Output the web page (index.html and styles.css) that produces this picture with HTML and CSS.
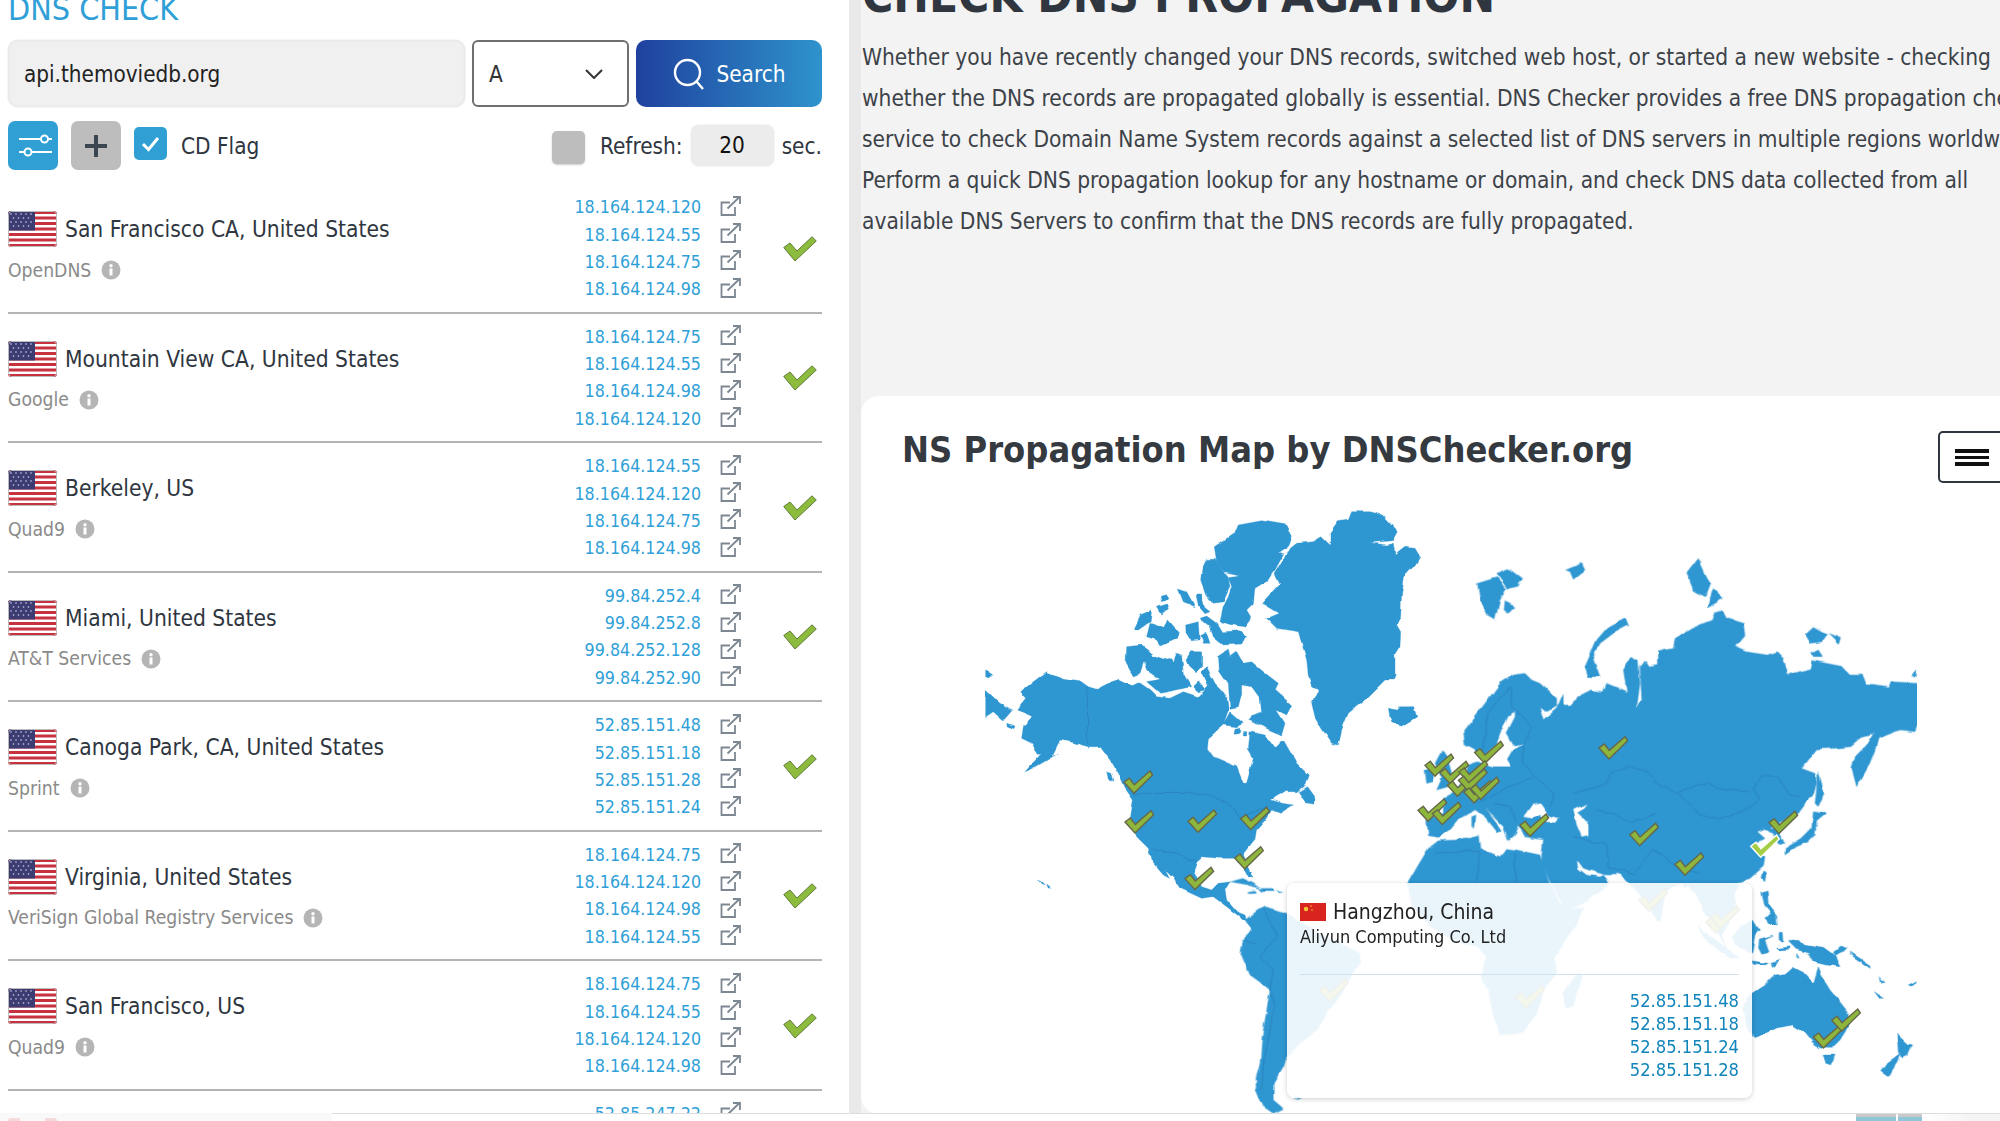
FILE: index.html
```html
<!DOCTYPE html>
<html lang="en">
<head>
<meta charset="utf-8">
<title>DNS Check</title>
<link rel="stylesheet" href="styles.css">
</head>
<body>
<svg class="defs" width="0" height="0">
  <defs>
    <symbol id="us" viewBox="0 0 49 36">
      <rect width="49" height="36" rx="3" fill="#fff"/>
      <g fill="#c8313e">
        <rect width="49" height="3"/><rect y="5.5" width="49" height="3"/><rect y="11" width="49" height="3"/><rect y="16.5" width="49" height="3"/><rect y="22" width="49" height="3"/><rect y="27.5" width="49" height="3"/><rect y="33" width="49" height="3"/>
      </g>
      <rect width="27" height="19.5" fill="#3d3c72"/>
      <g fill="#cfd3ea">
        <circle cx="3" cy="3" r=".8"/><circle cx="8" cy="3" r=".8"/><circle cx="13" cy="3" r=".8"/><circle cx="18" cy="3" r=".8"/><circle cx="23" cy="3" r=".8"/>
        <circle cx="5.5" cy="7" r=".8"/><circle cx="10.5" cy="7" r=".8"/><circle cx="15.5" cy="7" r=".8"/><circle cx="20.5" cy="7" r=".8"/>
        <circle cx="3" cy="11" r=".8"/><circle cx="8" cy="11" r=".8"/><circle cx="13" cy="11" r=".8"/><circle cx="18" cy="11" r=".8"/><circle cx="23" cy="11" r=".8"/>
        <circle cx="5.5" cy="15" r=".8"/><circle cx="10.5" cy="15" r=".8"/><circle cx="15.5" cy="15" r=".8"/><circle cx="20.5" cy="15" r=".8"/>
      </g>
      <rect x=".5" y=".5" width="48" height="35" rx="3" fill="none" stroke="#bdbdbd"/>
    </symbol>
    <symbol id="ext" viewBox="0 0 21 20">
      <path d="M10 6.500H1.500V19H15V11M7.500 12.500L19.500 1M13 1H20V8" fill="none" stroke="#7d8791" stroke-width="1.800"/>
    </symbol>
    <symbol id="good" viewBox="0 0 34 26">
      <path d="M.7 11.500L7 7L14 15L29 .8L33.300 5L12 25Z" fill="#8dbb3d" stroke="#5f7d38"/>
    </symbol>
    <symbol id="info" viewBox="0 0 20 20">
      <circle cx="10" cy="10" r="9.500" fill="#b5b5b5"/>
      <rect x="8.500" y="8.500" width="3" height="7" fill="#fff"/>
      <circle cx="10" cy="5.800" r="1.700" fill="#fff"/>
    </symbol>
    <path id="ck" d="M-14.300 .3L-9 -3.700L-4 2.700L11.700 -11L14.300 -7L-4.300 11.300Z"/>
  </defs>
</svg>

<main class="page">
  <section class="checker">
    <h2 class="checker-title">DNS CHECK</h2>
    <form class="lookup">
      <div class="domain">api.themoviedb.org</div>
      <div class="type">
        <span>A</span>
        <svg class="chevron" viewBox="0 0 18 10" width="18" height="10"><path d="M1 1L9 9L17 1" fill="none" stroke="#333" stroke-width="2"/></svg>
      </div>
      <button type="button" class="search">
        <svg viewBox="0 0 32 32" width="32" height="32"><circle cx="14.500" cy="14.500" r="12.500" fill="none" stroke="#fff" stroke-width="2.400"/><path d="M23.500 23.500L30 31" fill="none" stroke="#fff" stroke-width="2.400"/></svg>
        <span>Search</span>
      </button>
    </form>
    <div class="options">
      <span class="tool tool-blue">
        <svg viewBox="0 0 50 49" width="50" height="49"><g fill="none" stroke="#fff" stroke-width="2"><path d="M11 18H34M44 18H39"/><circle cx="36.500" cy="18" r="3.500"/><path d="M11 31H16M24 31H44"/><circle cx="20" cy="31" r="3.500"/></g></svg>
      </span>
      <span class="tool tool-gray">
        <svg viewBox="0 0 50 49" width="50" height="49"><path d="M14 25H36M25 14V36" stroke="#3b4651" stroke-width="4"/></svg>
      </span>
      <span class="box box-on">
        <svg viewBox="0 0 33 33" width="33" height="33"><path d="M9 17L14.500 22.500L24 11" fill="none" stroke="#fff" stroke-width="3"/></svg>
      </span>
      <span class="cd-label">CD Flag</span>
      <span class="box box-off"></span>
      <span class="refresh-label">Refresh:</span>
      <span class="seconds">20</span>
      <span class="sec-label">sec.</span>
    </div>

    <ul class="results">
      <li class="row">
        <div class="where"><div class="place"><svg class="flag"><use href="#us"/></svg><span>San Francisco CA, United States</span></div><div class="provider">OpenDNS <svg class="info"><use href="#info"/></svg></div></div>
        <div class="ips">
          <div class="ip"><span>18.164.124.120</span><svg class="ext"><use href="#ext"/></svg></div>
          <div class="ip"><span>18.164.124.55</span><svg class="ext"><use href="#ext"/></svg></div>
          <div class="ip"><span>18.164.124.75</span><svg class="ext"><use href="#ext"/></svg></div>
          <div class="ip"><span>18.164.124.98</span><svg class="ext"><use href="#ext"/></svg></div>
        </div>
        <svg class="good"><use href="#good"/></svg>
      </li>
      <li class="row">
        <div class="where"><div class="place"><svg class="flag"><use href="#us"/></svg><span>Mountain View CA, United States</span></div><div class="provider">Google <svg class="info"><use href="#info"/></svg></div></div>
        <div class="ips">
          <div class="ip"><span>18.164.124.75</span><svg class="ext"><use href="#ext"/></svg></div>
          <div class="ip"><span>18.164.124.55</span><svg class="ext"><use href="#ext"/></svg></div>
          <div class="ip"><span>18.164.124.98</span><svg class="ext"><use href="#ext"/></svg></div>
          <div class="ip"><span>18.164.124.120</span><svg class="ext"><use href="#ext"/></svg></div>
        </div>
        <svg class="good"><use href="#good"/></svg>
      </li>
      <li class="row">
        <div class="where"><div class="place"><svg class="flag"><use href="#us"/></svg><span>Berkeley, US</span></div><div class="provider">Quad9 <svg class="info"><use href="#info"/></svg></div></div>
        <div class="ips">
          <div class="ip"><span>18.164.124.55</span><svg class="ext"><use href="#ext"/></svg></div>
          <div class="ip"><span>18.164.124.120</span><svg class="ext"><use href="#ext"/></svg></div>
          <div class="ip"><span>18.164.124.75</span><svg class="ext"><use href="#ext"/></svg></div>
          <div class="ip"><span>18.164.124.98</span><svg class="ext"><use href="#ext"/></svg></div>
        </div>
        <svg class="good"><use href="#good"/></svg>
      </li>
      <li class="row">
        <div class="where"><div class="place"><svg class="flag"><use href="#us"/></svg><span>Miami, United States</span></div><div class="provider">AT&amp;T Services <svg class="info"><use href="#info"/></svg></div></div>
        <div class="ips">
          <div class="ip"><span>99.84.252.4</span><svg class="ext"><use href="#ext"/></svg></div>
          <div class="ip"><span>99.84.252.8</span><svg class="ext"><use href="#ext"/></svg></div>
          <div class="ip"><span>99.84.252.128</span><svg class="ext"><use href="#ext"/></svg></div>
          <div class="ip"><span>99.84.252.90</span><svg class="ext"><use href="#ext"/></svg></div>
        </div>
        <svg class="good"><use href="#good"/></svg>
      </li>
      <li class="row">
        <div class="where"><div class="place"><svg class="flag"><use href="#us"/></svg><span>Canoga Park, CA, United States</span></div><div class="provider">Sprint <svg class="info"><use href="#info"/></svg></div></div>
        <div class="ips">
          <div class="ip"><span>52.85.151.48</span><svg class="ext"><use href="#ext"/></svg></div>
          <div class="ip"><span>52.85.151.18</span><svg class="ext"><use href="#ext"/></svg></div>
          <div class="ip"><span>52.85.151.28</span><svg class="ext"><use href="#ext"/></svg></div>
          <div class="ip"><span>52.85.151.24</span><svg class="ext"><use href="#ext"/></svg></div>
        </div>
        <svg class="good"><use href="#good"/></svg>
      </li>
      <li class="row">
        <div class="where"><div class="place"><svg class="flag"><use href="#us"/></svg><span>Virginia, United States</span></div><div class="provider">VeriSign Global Registry Services <svg class="info"><use href="#info"/></svg></div></div>
        <div class="ips">
          <div class="ip"><span>18.164.124.75</span><svg class="ext"><use href="#ext"/></svg></div>
          <div class="ip"><span>18.164.124.120</span><svg class="ext"><use href="#ext"/></svg></div>
          <div class="ip"><span>18.164.124.98</span><svg class="ext"><use href="#ext"/></svg></div>
          <div class="ip"><span>18.164.124.55</span><svg class="ext"><use href="#ext"/></svg></div>
        </div>
        <svg class="good"><use href="#good"/></svg>
      </li>
      <li class="row">
        <div class="where"><div class="place"><svg class="flag"><use href="#us"/></svg><span>San Francisco, US</span></div><div class="provider">Quad9 <svg class="info"><use href="#info"/></svg></div></div>
        <div class="ips">
          <div class="ip"><span>18.164.124.75</span><svg class="ext"><use href="#ext"/></svg></div>
          <div class="ip"><span>18.164.124.55</span><svg class="ext"><use href="#ext"/></svg></div>
          <div class="ip"><span>18.164.124.120</span><svg class="ext"><use href="#ext"/></svg></div>
          <div class="ip"><span>18.164.124.98</span><svg class="ext"><use href="#ext"/></svg></div>
        </div>
        <svg class="good"><use href="#good"/></svg>
      </li>
      <li class="row">
        <div class="where"><div class="place"><span class="flag flag-ca"></span></div></div>
        <div class="ips">
          <div class="ip"><span>52.85.247.22</span><svg class="ext"><use href="#ext"/></svg></div>
        </div>
        <svg class="good"><use href="#good"/></svg>
      </li>
    </ul>
  </section>

  <section class="about">
    <h1 class="about-title">CHECK DNS PROPAGATION</h1>
    <p class="about-text">Whether you have recently changed your DNS records, switched web host, or started a new website - checking<br>whether the DNS records are propagated globally is essential. DNS Checker provides a free DNS propagation check<br>service to check Domain Name System records against a selected list of DNS servers in multiple regions worldwide.<br>Perform a quick DNS propagation lookup for any hostname or domain, and check DNS data collected from all<br>available DNS Servers to confirm that the DNS records are fully propagated.</p>

    <div class="card">
      <h3 class="card-title">NS Propagation Map by DNSChecker.org</h3>
      <button type="button" class="menu"><span></span><span></span><span></span></button>

      <svg class="map" viewBox="985 510 932 603" width="932" height="603">
        <defs>
          <filter id="coast" filterUnits="userSpaceOnUse" x="975" y="500" width="952" height="623">
            <feTurbulence type="fractalNoise" baseFrequency="0.07" numOctaves="2" seed="4"/>
            <feDisplacementMap in="SourceGraphic" scale="4.500" xChannelSelector="R" yChannelSelector="G"/>
          </filter>
        </defs>
        <g class="world">
        <g class="land" transform="translate(950 490) scale(.33333)">
          <polygon points="212,605 250,575 290,545 340,565 390,572 415,590 440,598 475,580 510,568 545,585 565,575 600,600 620,620 660,625 700,605 745,620 775,590 755,545 770,530 795,580 815,600 830,620 835,660 822,700 840,665 880,700 860,710 820,705 775,745 772,775 790,800 860,830 880,880 890,875 910,805 895,780 900,725 945,735 975,775 1000,750 1040,820 1075,855 1065,885 1040,905 1000,905 960,930 1000,940 1030,945 990,970 965,960 950,985 920,1020 915,1050 880,1095 905,1150 912,1165 895,1160 880,1130 850,1105 810,1105 755,1100 745,1110 730,1150 755,1190 785,1200 805,1180 840,1175 825,1200 830,1230 860,1265 885,1275 890,1292 875,1285 830,1250 790,1220 755,1225 690,1195 670,1165 600,1095 595,1075 560,1040 540,990 550,930 525,895 510,860 480,810 450,770 415,770 360,755 330,750 305,800 325,790 250,835 225,845 275,790 265,790 245,760 215,745 220,710 250,680 200,660 230,625"/>
          <polygon points="605,1090 630,1110 658,1165 640,1155 610,1120"/>
          <polygon points="793,170 855,128 865,105 935,92 1010,105 1027,135 1015,170 985,190 1000,195 975,240 955,270 915,295 910,340 890,360 905,385 885,410 850,405 810,395 820,350 835,320 845,290 835,260 865,255 825,245 800,215"/>
          <polygon points="770,205 795,205 835,260 840,290 820,335 790,340 770,315 755,270 760,225"/>
          <polygon points="1015,180 1040,160 1090,155 1115,140 1140,165 1140,130 1165,95 1195,90 1205,65 1260,65 1300,75 1342,122 1325,152 1260,158 1310,165 1330,160 1335,195 1365,172 1395,175 1410,200 1395,225 1365,258 1355,310 1352,380 1340,405 1352,425 1350,470 1335,495 1335,560 1330,570 1305,570 1250,625 1195,670 1175,720 1165,765 1145,760 1115,715 1095,680 1085,640 1105,595 1085,590 1075,555 1070,510 1045,425 980,415 950,385 985,370 935,340 990,280 975,250 1000,210"/>
          <polygon points="1315,655 1345,660 1390,650 1400,680 1355,708 1325,695 1320,680"/>
          <polygon points="550,415 570,375 605,360 600,395 565,420"/>
          <polygon points="590,440 600,400 645,415 655,390 685,425 680,445 630,465 620,450"/>
          <polygon points="622,352 650,342 655,360 635,372"/>
          <polygon points="630,320 645,312 655,328 635,335"/>
          <polygon points="685,297 710,305 735,350 700,335"/>
          <polygon points="738,315 755,315 765,350 780,362 765,368 745,345"/>
          <polygon points="707,405 745,395 748,450 725,452 708,425"/>
          <polygon points="752,440 770,430 780,460 760,460"/>
          <polygon points="750,385 770,378 800,400 815,425 870,422 887,440 875,462 820,465 790,440 780,410"/>
          <polygon points="530,470 575,465 608,490 580,520 570,550 550,558 528,520"/>
          <polygon points="580,510 600,495 640,510 660,505 670,515 680,490 695,495 700,550 722,590 680,600 630,610 590,575 630,568 590,540"/>
          <polygon points="708,510 725,485 755,485 755,530 735,548 715,530"/>
          <polygon points="730,590 745,575 765,600 745,605"/>
          <polygon points="805,500 835,480 840,500 860,485 880,520 905,515 940,545 985,580 975,600 1025,645 1010,675 980,660 1005,700 995,735 960,720 895,690 910,675 935,665 930,625 905,590 875,585 875,610 865,650 840,655 835,580 808,540"/>
          <polygon points="855,715 870,712 868,728 852,730"/>
          <polygon points="880,725 890,725 890,738 880,738"/>
          <polygon points="1045,905 1070,890 1095,925 1095,940 1065,935"/>
          <polygon points="470,845 485,850 492,877 475,868"/>
          <polygon points="107,540 130,550 120,560 107,558"/>
          <polygon points="107,600 150,640 188,660 160,692 130,665 107,680"/>
          <polygon points="170,700 195,708 192,716 172,708"/>
          <polygon points="262,1170 280,1178 285,1185 275,1180"/>
          <polygon points="290,1185 302,1195 295,1198"/>
          <ellipse class="hole" cx="913" cy="628" rx="10" ry="15"/>
          <polyline class="border" points="413,590 413,760"/>
          <polyline class="border" points="550,910 770,910 850,950 870,985 955,945"/>
          <polyline class="border" points="610,1075 680,1090 720,1110 745,1110"/>
        </g>

        <g class="land" transform="translate(1130 850) scale(.33333)">
          <polygon points="300,95 335,85 370,100 390,115 355,105"/>
          <polygon points="355,125 375,120 380,127 360,128"/>
          <polygon points="385,115 425,115 430,125 395,125"/>
          <polygon points="440,123 458,127 442,128"/>
          <polygon points="345,210 385,180 410,170 470,190 530,225 600,265 690,310 690,335 650,400 640,430 595,480 560,540 520,570 470,620 460,650 430,700 430,750 460,775 430,790 400,770 378,720 378,680 390,640 395,570 420,420 395,400 360,375 332,310 340,265 365,240"/>
          <polygon points="490,745 515,742 505,748"/>
          <polygon points="830,100 850,170 900,230 970,270 1040,290 1070,320 1050,380 1075,420 1085,480 1110,555 1180,545 1225,490 1240,420 1280,370 1275,320 1340,220 1360,170 1310,175 1290,160 1262,100"/>
          <polygon points="1345,365 1355,375 1330,470 1305,470 1300,430"/>
          <polyline class="border" points="400,175 440,260 390,320 430,360 420,420 435,470 400,640 395,720"/>
          <polyline class="border" points="340,270 385,285"/>
        </g>

        <g class="land" transform="translate(1400 520) scale(.33333)">
          <polygon points="85,950 80,900 110,885 130,880 130,835 165,815 195,770 205,735 235,725 280,740 335,740 320,715 335,690 375,672 340,675 320,640 345,590 345,575 325,585 305,630 290,670 250,705 195,675 190,635 240,570 270,530 300,490 340,465 375,460 395,480 420,490 470,535 470,560 440,575 418,560 430,602 470,565 490,520 490,555 515,555 530,530 570,510 610,515 620,490 680,515 670,450 690,415 715,420 720,490 710,565 725,540 720,440 735,420 745,435 775,430 775,395 820,385 825,355 875,325 935,300 945,275 965,268 980,295 1030,310 1035,345 1005,380 1040,395 1105,405 1130,395 1150,415 1165,465 1230,445 1235,418 1320,435 1350,465 1385,465 1395,490 1470,500 1475,485 1556,490 1556,600 1545,635 1500,630 1435,655 1425,690 1405,740 1370,800 1355,745 1365,710 1400,675 1420,640 1385,650 1350,680 1300,685 1250,687 1205,745 1245,760 1250,790 1240,820 1195,880 1150,905 1110,925 1130,930 1155,970 1140,970 1120,945 1095,925 1072,935 1095,955 1060,975 1095,1010 1090,1040 1050,1075 1000,1092 865,1092 855,1105 845,1092 690,1092 660,1062 610,1062 625,1092 550,1150 495,1170 470,1120 425,1035 425,1005 430,960 370,950 355,915 340,950 325,962 310,920 255,865 285,905 305,935 290,935 250,885 225,870 175,900 150,930 115,955"/>
          <polygon points="105,730 125,692 140,705 155,760 145,800 110,810 125,775"/>
          <polygon points="75,750 100,745 100,785 80,790"/>
          <polygon points="20,1095 55,1035 85,985 115,962 170,960 235,945 240,985 300,1010 320,985 350,990 420,1005 430,1040 452,1095"/>
          <polygon points="215,890 228,885 225,925 215,920"/>
          <polygon points="232,190 290,172 320,205 300,240 285,300 260,285 240,240"/>
          <polygon points="290,160 325,145 365,175 350,200 325,205"/>
          <polygon points="315,245 345,260 325,280 312,270"/>
          <polygon points="497,150 545,130 555,150 520,178 510,155"/>
          <polygon points="555,440 590,360 620,325 680,295 688,315 640,340 600,370 580,415 600,470 565,470"/>
          <polygon points="860,160 895,115 930,190 915,230 880,210"/>
          <polygon points="940,205 970,235 920,265"/>
          <polygon points="1215,345 1240,322 1280,345 1265,365 1230,370"/>
          <polygon points="1285,340 1322,355 1315,370"/>
          <polygon points="1235,400 1255,390 1268,410 1240,410"/>
          <polygon points="1535,465 1548,450 1550,470"/>
          <polygon points="1255,755 1265,790 1272,820 1255,860 1245,850 1250,800"/>
          <polygon points="1240,875 1280,880 1250,905 1245,945 1225,965 1190,980 1155,1005 1155,985 1205,955 1235,925"/>
          <polygon points="1085,1065 1098,1055 1095,1085"/>
          <polygon points="0,560 40,560 48,590 0,618"/>
          <polygon class="hole" points="370,890 395,855 420,850 445,885 475,895 465,908 440,905 420,885 400,895"/>
          <polygon class="hole" points="520,870 560,850 535,880 565,910 565,945 545,950 530,915"/>
          <polygon class="hole" points="530,1018 550,1045 580,1055 612,1064 600,1070 560,1065 535,1045"/>
          <polyline class="border" points="245,705 265,575 330,500 335,560 395,620 370,680 370,730 405,770 465,820 450,860"/>
          <polyline class="border" points="520,820 625,790 630,760 690,740 740,755 770,790 830,820 880,860 900,885 960,900 1020,875 1080,840 1060,810 1080,770 1130,770 1170,825 1200,830"/>
          <polyline class="border" points="830,820 870,800 920,790 970,810 1050,815"/>
          <polyline class="border" points="100,1000 235,990 230,1090"/>
          <polyline class="border" points="345,1000 345,1090"/>
          <polyline class="border" points="590,870 640,880 690,910 770,880"/>
          <polyline class="border" points="520,950 620,975 625,1040 700,1060 760,990 830,1040 900,1060"/>
          <polyline class="border" points="230,850 330,800 400,770"/>
          <polyline class="border" points="280,850 330,860 350,900"/>
        </g>

        <g class="land" transform="translate(1640 850) scale(.33333)">
          <polygon points="-30,100 130,100 75,125 70,170 60,215 50,210 20,160"/>
          <polygon points="140,100 165,130 195,190 215,215 240,260 262,300 245,255 270,215 290,170 285,125 300,100"/>
          <polygon points="170,225 215,260 300,325 270,325 205,275"/>
          <polygon points="275,260 300,230 340,210 358,240 345,255 335,310 285,285"/>
          <polygon points="362,125 382,120 385,165 410,195 412,225 390,220 378,205 392,190 370,165"/>
          <polygon points="362,85 372,62 380,70 370,95"/>
          <polygon points="358,270 400,258 375,270 388,305 365,310 355,290"/>
          <polygon points="420,250 430,250 432,275 420,270"/>
          <polygon points="445,275 475,270 490,285 550,295 585,320 600,350 560,345 520,335 505,310 470,300"/>
          <polygon points="580,310 605,288 620,295 610,305 585,320"/>
          <polygon points="408,295 450,290 445,298 412,300"/>
          <polygon points="390,340 420,330 395,350"/>
          <polygon points="335,332 385,340 375,345 340,340"/>
          <polygon points="470,310 478,325 470,322"/>
          <polygon points="630,305 690,345 690,355 640,320"/>
          <polygon points="720,380 735,398 725,398"/>
          <polygon points="700,425 730,445 715,445"/>
          <polygon points="805,405 830,392 825,402 810,412"/>
          <polygon points="310,470 320,445 335,430 375,405 405,375 440,370 460,352 495,370 505,380 520,400 535,350 555,395 570,420 620,480 625,530 600,570 575,595 545,595 520,580 495,550 455,525 410,535 345,560 320,530"/>
          <polygon points="552,615 585,615 575,645 560,640"/>
          <polygon points="770,552 800,580 818,585 805,615 785,625 775,605"/>
          <polygon points="780,610 770,640 745,680 722,665 740,640"/>
        </g>
        </g>

        <g class="checks">
          <use href="#ck" x="1138.300" y="782"/>
          <use href="#ck" x="1139.300" y="821.700"/>
          <use href="#ck" x="1202.300" y="821"/>
          <use href="#ck" x="1255" y="818.300"/>
          <use href="#ck" x="1249" y="857.700"/>
          <use href="#ck" x="1199.300" y="878.300"/>
          <use href="#ck" x="1613.300" y="747.700"/>
          <use href="#ck" x="1489" y="752.300"/>
          <use href="#ck" x="1439.300" y="765"/>
          <use href="#ck" x="1454.300" y="772.300"/>
          <use href="#ck" x="1461.700" y="785"/>
          <use href="#ck" x="1473.300" y="771.700"/>
          <use href="#ck" x="1472.700" y="780"/>
          <use href="#ck" x="1478.300" y="791.700"/>
          <use href="#ck" x="1485" y="788.300"/>
          <use href="#ck" x="1432.300" y="810"/>
          <use href="#ck" x="1446.700" y="813.300"/>
          <use href="#ck" x="1534.300" y="825"/>
          <use href="#ck" x="1644" y="834.300"/>
          <use href="#ck" x="1689.300" y="864"/>
          <use href="#ck" x="1783.300" y="822.300"/>
          <use class="ck-active" href="#ck" x="1765" y="846"/>
          <use href="#ck" x="1334" y="990"/>
          <use href="#ck" x="1530" y="996.700"/>
          <use href="#ck" x="1653.300" y="900"/>
          <use href="#ck" x="1720" y="921.700"/>
          <use href="#ck" x="1725" y="917"/>
          <use href="#ck" x="1827.700" y="1036.700"/>
          <use href="#ck" x="1846" y="1020"/>
        </g>
      </svg>

      <div class="tip">
        <div class="tip-place">
          <svg class="tip-flag" viewBox="0 0 26 18" width="26" height="18"><rect width="26" height="18" fill="#d8231f"/><circle cx="6" cy="6" r="2.200" fill="#f2c531"/><circle cx="11" cy="3" r=".8" fill="#f2c531"/><circle cx="12" cy="7" r=".8" fill="#f2c531"/></svg>
          <span>Hangzhou, China</span>
        </div>
        <div class="tip-org">Aliyun Computing Co. Ltd</div>
        <div class="tip-ips">
          <div>52.85.151.48</div>
          <div>52.85.151.18</div>
          <div>52.85.151.24</div>
          <div>52.85.151.28</div>
        </div>
      </div>
    </div>
  </section>
</main>

<footer class="strip">
  <div class="strip-left"></div>
  <div class="strip-main"><span class="tile tile-a"></span><span class="tile tile-b"></span></div>
</footer>
</body>
</html>
```

FILE: styles.css
```css
* { box-sizing: border-box; }
html, body { margin: 0; height: 1121px; overflow: hidden; background: #fff; }
body {
  font-family: "DejaVu Sans Condensed", "DejaVu Sans", sans-serif;
  font-stretch: condensed;
  color: #2f3640;
}
.defs { position: absolute; }
.page { display: flex; height: 1121px; overflow: hidden; }

/* left column */
.checker { flex: 0 0 849px; padding: 0 27px 0 8px; background: #fff; }
.checker-title {
  margin: -6px 0 16px;
  height: 30px;
  font-size: 32px;
  line-height: 30px;
  font-weight: 400;
  color: #2f9fd8;
  white-space: nowrap;
}
.lookup { display: flex; gap: 7px; height: 67px; }
.domain {
  flex: 0 0 457px;
  padding: 2px 0 0 16px;
  line-height: 65px;
  font-size: 22.300px;
  color: #222;
  background: #f0f0f0;
  border-radius: 10px;
  box-shadow: inset 0 0 3px #ddd, 0 0 2px #ddd;
}
.type {
  flex: 0 0 157px;
  display: flex;
  align-items: center;
  justify-content: space-between;
  padding: 0 24px 0 15px;
  font-size: 22.400px;
  color: #333;
  border: 2px solid #6f6f6f;
  border-radius: 6px;
}
.search {
  flex: 1;
  display: flex;
  align-items: center;
  justify-content: center;
  gap: 11px;
  padding: 0 0 0 1px;
  font: inherit;
  font-size: 22.400px;
  color: #fff;
  border: 0;
  border-radius: 10px;
  background: linear-gradient(90deg, #1f419e, #2e93cc);
}
.options { display: flex; align-items: center; height: 49px; margin-top: 14px; font-size: 22.400px; }
.tool { flex: 0 0 50px; height: 49px; border-radius: 7px; margin-right: 13px; }
.tool svg { display: block; }
.tool-blue { background: #2f9fd4; }
.tool-gray { background: #bdbdbd; }
.box { flex: 0 0 33px; height: 33px; border-radius: 5px; }
.box svg { display: block; }
.box-on { background: #2f9fd4; margin-top: -4px; }
.box-off { background: #bdbdbd; margin-left: auto; margin-top: 4px; box-shadow: 0 1px 2px #ccc; }
.cd-label { margin-left: 14px; }
.refresh-label { margin-left: 15px; }
.seconds {
  flex: 0 0 83px;
  height: 41px;
  margin-left: 8px;
  line-height: 41px;
  text-align: center;
  color: #111;
  background: #ececec;
  border-radius: 8px;
  box-shadow: 0 0 2px #ddd;
}
.sec-label { margin-left: 8px; }

.results { list-style: none; margin: 14px 0 0; padding: 0; }
.row {
  display: flex;
  align-items: center;
  height: 129.500px;
  padding: 9.500px 5px 8.400px 0;
  border-bottom: 2px solid #b4b4b4;
}
.where { flex: 1; align-self: flex-start; padding-top: 17.500px; }
.place { display: flex; align-items: center; gap: 8px; height: 36px; font-size: 22.600px; color: #2f3640; white-space: nowrap; }
.flag { display: block; flex: 0 0 49px; width: 49px; height: 36px; border-radius: 3px; }
.flag-ca { background: linear-gradient(90deg, #d33 0 25%, #fff 25% 75%, #d33 75%); }
.provider {
  display: flex;
  align-items: center;
  gap: 10px;
  height: 28px;
  margin-top: 9px;
  font-size: 19.200px;
  color: #8a8a8a;
  white-space: nowrap;
}
.info { display: block; width: 20px; height: 20px; }
.ips { flex: 0 0 auto; align-self: flex-start; margin-right: 42px; }
.ip {
  display: flex;
  justify-content: flex-end;
  align-items: center;
  gap: 19px;
  height: 27.400px;
  font-size: 17.700px;
  color: #2f9fd8;
}
.ext { display: block; width: 21px; height: 20px; margin-top: -3px; }
.good { display: block; flex: 0 0 34px; width: 34px; height: 26px; margin-top: 1px; }

/* right column */
.about {
  flex: 1;
  min-width: 0;
  padding-left: 1px;
  border-left: 12px solid #e9e9e9;
  background: #f3f3f3;
  overflow: hidden;
}
.about-title {
  margin: -25px 0 0;
  height: 41px;
  font-size: 47.400px;
  line-height: 41px;
  color: #2f3640;
  white-space: nowrap;
}
.about-text {
  margin: 21px 0 0;
  font-size: 22.500px;
  line-height: 41px;
  color: #3c4248;
  white-space: nowrap;
}
.card {
  position: relative;
  height: 718px;
  width: 1200px;
  margin: 154px 0 0 -1px;
  background: #fff;
  border-radius: 18px;
}
.card-title {
  margin: 0;
  padding: 34px 0 0 41px;
  font-size: 35.900px;
  line-height: 40px;
  font-weight: 700;
  color: #343a40;
  white-space: nowrap;
}
.menu {
  position: absolute;
  left: 1077px;
  top: 35px;
  display: flex;
  flex-direction: column;
  gap: 3px;
  width: 72px;
  height: 52px;
  padding: 16px 0 0 15px;
  background: #fff;
  border: 2px solid #2f3640;
  border-radius: 5px;
}
.menu span { display: block; width: 34px; height: 3.500px; background: #111; }
.map { position: absolute; left: 124px; top: 114px; display: block; overflow: hidden; }
.world { filter: url(#coast); }
.land polygon { fill: #2f96d1; stroke: #2f96d1; stroke-width: 1; }
.land .hole { fill: #fff; stroke: none; }
.land .border { fill: none; stroke: #2a85c0; stroke-width: 3; }
.checks use { fill: #8eb63c; stroke: #66684a; stroke-width: 1.400; }
.checks .ck-active { fill: #a4cc45; stroke: #fff; }
.tip {
  position: absolute;
  left: 426px;
  top: 487px;
  width: 465px;
  height: 215px;
  padding: 19px 13px 0;
  background: rgba(255, 255, 255, .9);
  border-radius: 8px;
  box-shadow: 0 1px 5px rgba(0, 0, 0, .2);
}
.tip-place { display: flex; align-items: center; gap: 7px; height: 20px; font-size: 21px; color: #222; }
.tip-flag { display: block; }
.tip-org { height: 24px; margin-top: 3px; font-size: 18px; line-height: 24px; color: #222; }
.tip-ips {
  margin-top: 24.500px;
  padding-top: 14px;
  border-top: 1px solid #cfe2ee;
  font-size: 18.200px;
  line-height: 23px;
  text-align: right;
  color: #1184bb;
}

/* bottom strip */
.strip { position: fixed; left: 0; right: 0; bottom: 0; height: 8px; display: flex; }
.strip-left { flex: 0 0 332px; background: rgba(248, 248, 248, .85); }
.strip-main {
  flex: 1;
  display: flex;
  gap: 2px;
  padding-left: 1524px;
  background: linear-gradient(90deg, #fff 0 1590px, #f4f4f4 1640px);
  border-top: 1px solid #ddd;
}
.tile { display: block; height: 7px; background: linear-gradient(#c9c9c9 0 3px, #8fc6d8 3px); }
.tile-a { flex: 0 0 40px; }
.tile-b { flex: 0 0 24px; }
```
